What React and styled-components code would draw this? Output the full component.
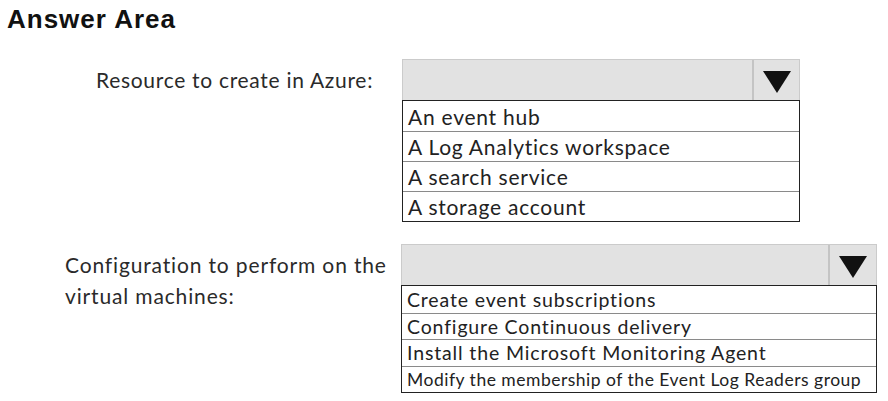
import React from "react";
import styled, { createGlobalStyle } from "styled-components";

const Global = createGlobalStyle`
  html, body { margin: 0; padding: 0; background: #fff; }
  body { width: 888px; height: 401px; overflow: hidden; }
`;

const Page = styled.div`
  padding: 4px 0 0 7px;
  font-family: Lato, "Liberation Sans", sans-serif;
  color: #262626;
`;

const Heading = styled.h1`
  margin: 0;
  font-family: "Liberation Sans", Arial, sans-serif;
  font-weight: 700;
  font-size: 26px;
  letter-spacing: 1px;
  line-height: 30px;
  color: #111;
`;

const Question = styled.div`
  display: flex;
  align-items: flex-start;
  margin-top: ${(p) => p.$top}px;
`;

const Label = styled.div`
  box-sizing: border-box;
  width: ${(p) => p.$width}px;
  padding-left: ${(p) => p.$indent}px;
  padding-top: ${(p) => p.$padTop}px;
  font-size: 21px;
  letter-spacing: ${(p) => p.$spacing}px;
  line-height: 30.5px;
  color: #2a2a2a;
  white-space: nowrap;
`;

const Dropdown = styled.div`
  display: flex;
  flex-direction: column;
  width: ${(p) => p.$width}px;
`;

const Select = styled.div`
  box-sizing: border-box;
  height: ${(p) => p.$height}px;
  display: flex;
  background: #e2e2e2;
  border: 1px solid #cbcbcb;
  border-bottom: none;
`;

const SelectField = styled.div`
  flex: 1;
`;

const ArrowCell = styled.div`
  box-sizing: border-box;
  width: ${(p) => p.$width}px;
  padding-top: 3px;
  border-left: 2px solid #c4c4c4;
  display: flex;
  align-items: center;
  justify-content: center;
`;

const Options = styled.ul`
  list-style: none;
  margin: 0;
  padding: 0;
  border: 1.5px solid #222;
  background: #fff;
`;

const Option = styled.li`
  box-sizing: border-box;
  height: ${(p) => p.$height}px;
  padding-left: 5px;
  display: flex;
  align-items: center;
  font-size: ${(p) => p.$size}px;
  letter-spacing: ${(p) => p.$spacing}px;
  color: #222;
  white-space: nowrap;
  & + & { border-top: 1px solid #8a8a8a; }
`;

const Arrow = () => (
  <svg width="28" height="22" viewBox="0 0 28 22">
    <polygon points="0,0 28,0 14,22" fill="#111" />
  </svg>
);

const questions = [
  {
    top: 25,
    labelWidth: 395,
    indent: 89,
    padTop: 6,
    spacing: 0.7,
    label: ["Resource to create in Azure:"],
    width: 398,
    selectH: 41,
    arrowW: 47,
    rowH: 30,
    options: [
      ["An event hub", 21, 0.75],
      ["A Log Analytics workspace", 21, 0.75],
      ["A search service", 21, 0.75],
      ["A storage account", 21, 0.75],
    ],
  },
  {
    top: 22,
    labelWidth: 394,
    indent: 58,
    padTop: 6,
    spacing: 0.85,
    label: ["Configuration to perform on the", "virtual machines:"],
    width: 476,
    selectH: 41,
    arrowW: 48,
    rowH: 26.5,
    options: [
      ["Create event subscriptions", 19.5, 0.85],
      ["Configure Continuous delivery", 19.5, 0.85],
      ["Install the Microsoft Monitoring Agent", 19.5, 0.85],
      ["Modify the membership of the Event Log Readers group", 17.5, 0.5],
    ],
  },
];

export default function App() {
  return (
    <Page>
      <Global />
      <Heading>Answer Area</Heading>
      {questions.map((q, i) => (
        <Question key={i} $top={q.top}>
          <Label
            $width={q.labelWidth}
            $indent={q.indent}
            $padTop={q.padTop}
            $spacing={q.spacing}
          >
            {q.label.map((l, j) => (
              <div key={j}>{l}</div>
            ))}
          </Label>
          <Dropdown $width={q.width}>
            <Select $height={q.selectH}>
              <SelectField />
              <ArrowCell $width={q.arrowW}>
                <Arrow />
              </ArrowCell>
            </Select>
            <Options>
              {q.options.map(([t, s, ls]) => (
                <Option key={t} $height={q.rowH} $size={s} $spacing={ls}>
                  {t}
                </Option>
              ))}
            </Options>
          </Dropdown>
        </Question>
      ))}
    </Page>
  );
}
